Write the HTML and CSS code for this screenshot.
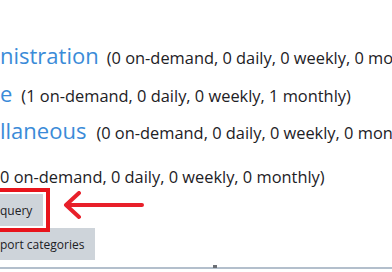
FILE: index.html
```html
<!DOCTYPE html>
<html lang="en">
<head>
  <meta charset="UTF-8" />
  <title>Ad-hoc database queries</title>
  <link rel="stylesheet" href="styles.css">
</head>
<body>
  <div class="page">
    <div class="cat cat-first">
      <a class="cat-name" href="#">nistration</a>
      <span class="cat-count">(0 on-demand, 0 daily, 0 weekly, 0 monthly)</span>
    </div>
    <div class="cat cat-second">
      <a class="cat-name" href="#">e</a>
      <span class="cat-count">(1 on-demand, 0 daily, 0 weekly, 1 monthly)</span>
    </div>
    <div class="cat cat-third">
      <a class="cat-name" href="#">llaneous</a>
      <span class="cat-count">(0 on-demand, 0 daily, 0 weekly, 0 monthly)</span>
    </div>
    <div class="cat-plain">0 on-demand, 0 daily, 0 weekly, 0 monthly)</div>

    <div class="actions">
      <div class="highlight">
        <button class="btn" type="button">query</button>
        <span class="mark-box"></span>
        <svg class="mark-arrow" width="84" height="32" viewBox="0 0 84 32">
          <path d="M3 14 H79 M3 14 L16 2 M3 14 L16 26" fill="none" stroke="#e8202a" stroke-width="4" stroke-linecap="round" stroke-linejoin="round"/>
        </svg>
      </div>
      <button class="btn" type="button">port categories</button>
    </div>
  </div>
  <div class="footer-line"><span class="grip"></span></div>
</body>
</html>
```

FILE: styles.css
```css
body {
  margin: 0;
  width: 392px;
  height: 272px;
  overflow: hidden;
  background: #fff;
  font-family: "Open Sans", "Noto Sans", sans-serif;
  color: #1d2125;
  position: relative;
}

.page {
  padding-top: 39px;
}

.cat {
  display: flex;
  align-items: baseline;
  white-space: nowrap;
  height: 32px;
}

.cat-name {
  font-size: 22px;
  line-height: 32px;
  color: #3a8bd8;
  text-decoration: none;
}

.cat-count {
  font-size: 16.4px;
  line-height: 24px;
}

.cat-first .cat-name { margin-right: 8px; }
.cat-second { margin-top: 6px; }
.cat-second .cat-name { margin-right: 9px; }
.cat-third { margin-top: 5px; }
.cat-third .cat-name { margin-right: 10px; }

.cat-plain {
  margin-top: 19px;
  font-size: 16.4px;
  line-height: 24px;
  white-space: nowrap;
}

.actions {
  margin-top: 5px;
  display: flex;
  flex-direction: column;
  align-items: flex-start;
  gap: 2px;
}

.btn {
  font-family: "Open Sans", "Noto Sans", sans-serif;
  font-size: 12px;
  color: #1d2125;
  background: #ced4da;
  border: 0;
  border-radius: 0;
  height: 32px;
  padding: 0 11px 0 0;
}

.highlight {
  position: relative;
}

.mark-box {
  position: absolute;
  left: -10px;
  top: -6px;
  width: 52px;
  height: 36px;
  border: 4px solid #e8141c;
}

.mark-arrow {
  position: absolute;
  left: 63px;
  top: -3px;
}

.footer-line {
  position: absolute;
  left: 0;
  right: 0;
  top: 267px;
  height: 2px;
  background: #b3bfcc;
}

.grip {
  position: absolute;
  left: 213px;
  top: -2px;
  width: 4px;
  height: 3px;
  background: #6b6f75;
}
```
